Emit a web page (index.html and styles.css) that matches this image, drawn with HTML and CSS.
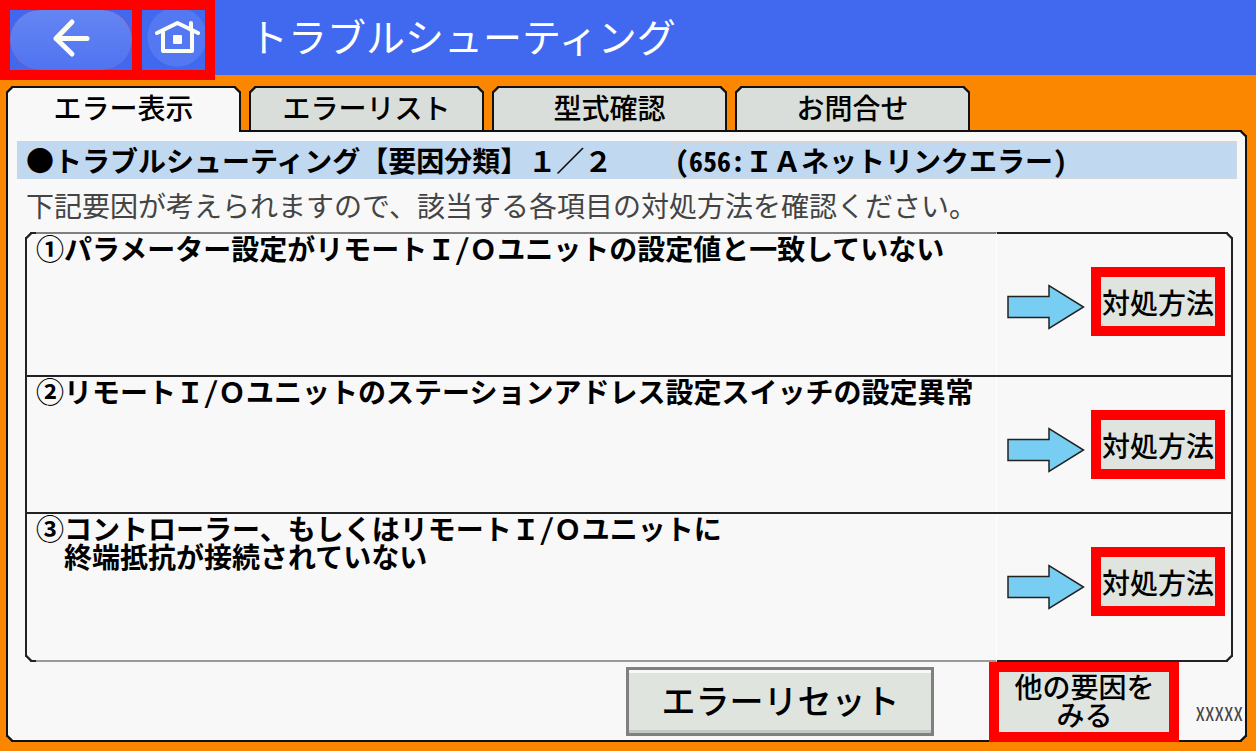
FILE: index.html
```html
<!DOCTYPE html>
<html lang="ja">
<head>
    <meta charset="UTF-8">
    <meta name="viewport" content="width=device-width, initial-scale=1.0">
    <title>トラブルシューティング</title>
    <link rel="stylesheet" href="styles.css">
</head>
<body>

<header class="header">
    <nav class="nav">
        <button class="nav-back" aria-label="戻る">
            <svg width="38" height="40" viewBox="0 0 38 40" fill="none" stroke="#fbfdf4" stroke-width="5" stroke-linecap="round" stroke-linejoin="round">
                <path d="M20 4L4 20.500L20 36M4 20.500H35"/>
            </svg>
        </button>
        <button class="nav-home" aria-label="ホーム">
            <svg width="46" height="34" viewBox="0 0 46 34" fill="none" stroke="#fbfdf4" stroke-width="4" stroke-linecap="round" stroke-linejoin="round">
                <path d="M3 13L23.500 3L44 13M37 10V3M9 12V31H38V12"/>
                <rect x="19" y="15" width="9" height="9" rx="1" fill="#fbfdf4" stroke="none"/>
            </svg>
        </button>
    </nav>
    <h1 class="title">トラブルシューティング</h1>
</header>

<main class="main">
    <div class="tabs">
        <button class="tab active">エラー表示</button>
        <button class="tab">エラーリスト</button>
        <button class="tab">型式確認</button>
        <button class="tab">お問合せ</button>
    </div>

    <section class="panel">
        <div class="band">
            <h2 class="band-title">●トラブルシューティング【要因分類】１／２</h2>
            <p class="band-error"><span class="half">(656:</span>ＩＡネットリンクエラー<span class="half">)</span></p>
        </div>
        <p class="lead">下記要因が考えられますので、該当する各項目の対処方法を確認ください。</p>

        <ul class="causes">
            <li class="row">
                <p class="cause">①パラメーター設定がリモートＩ<span class="half">/</span>Ｏユニットの設定値と一致していない</p>
                <div class="action">
                    <svg class="arrow" width="78" height="46" viewBox="0 0 78 46">
                        <path d="M1 12.500H42V1.500L76.500 23L42 44.500V33.500H1Z" fill="#78cdf2" stroke="#222" stroke-width="1.500"/>
                    </svg>
                    <button class="fix">対処方法</button>
                </div>
            </li>
            <li class="row">
                <p class="cause">②リモートＩ<span class="half">/</span>Ｏユニットのステーションアドレス設定スイッチの設定異常</p>
                <div class="action">
                    <svg class="arrow" width="78" height="46" viewBox="0 0 78 46">
                        <path d="M1 12.500H42V1.500L76.500 23L42 44.500V33.500H1Z" fill="#78cdf2" stroke="#222" stroke-width="1.500"/>
                    </svg>
                    <button class="fix">対処方法</button>
                </div>
            </li>
            <li class="row">
                <p class="cause">③コントローラー、もしくはリモートＩ<span class="half">/</span>Ｏユニットに<br>　終端抵抗が接続されていない</p>
                <div class="action">
                    <svg class="arrow" width="78" height="46" viewBox="0 0 78 46">
                        <path d="M1 12.500H42V1.500L76.500 23L42 44.500V33.500H1Z" fill="#78cdf2" stroke="#222" stroke-width="1.500"/>
                    </svg>
                    <button class="fix">対処方法</button>
                </div>
            </li>
        </ul>

        <footer class="footer">
            <button class="reset">エラーリセット</button>
            <button class="more">他の要因を<br>みる</button>
            <span class="code half">XXXXX</span>
        </footer>
    </section>
</main>

</body>
</html>
```

FILE: styles.css
```css
* {
    box-sizing: border-box;
}

body {
    margin: 0;
    min-height: 100vh;
    display: flex;
    flex-direction: column;
    font-family: "Noto Sans CJK JP", sans-serif;
    font-size: 28px;
    line-height: 28px;
    color: #000;
    background-color: #fb8600;
}

h1, h2, p, ul {
    margin: 0;
    padding: 0;
    font-weight: normal;
}

button {
    font: inherit;
    color: inherit;
    padding: 0;
    border: none;
    cursor: pointer;
}

/* half-width latin */
.half {
    font-feature-settings: "hwid";
}

/* Header */
.header {
    display: flex;
    align-items: flex-start;
    gap: 34px;
    height: 75px;
    background-color: #4169f0;
}

.nav {
    display: flex;
    gap: 10px;
    padding: 10px;
    background-color: #f00;
}

.nav button {
    display: flex;
    align-items: center;
    justify-content: center;
    height: 60px;
}

.nav .nav-back {
    width: 122px;
    padding-bottom: 5px;
    background: linear-gradient(#6585f3, #5074f1 60px);
    border-radius: 30px;
    box-shadow: 0 0 0 30px #4169f0;
    clip-path: inset(0);
}

.nav .nav-home {
    width: 63px;
    padding: 0 0 6px 7px;
    background: radial-gradient(circle at 35px 27px, #5478f1 29px, transparent 30px), #4169f0;
}

.title {
    font-size: 39px;
    line-height: 70px;
    color: #fff;
}

/* Tabs */
.main {
    flex: 1;
    display: flex;
    flex-direction: column;
    padding: 11px 9px 9px 6px;
}

.tabs {
    display: flex;
    gap: 8px;
}

.tab {
    width: 235px;
    height: 44px;
    padding-bottom: 4px;
    font-weight: 500;
    background-color: #dadeda;
    border: 2px solid #111;
    border-bottom: none;
    border-radius: 6px 6px 0 0;
    corner-shape: bevel;
}

.tab.active {
    position: relative;
    height: 46px;
    margin-bottom: -2px;
    padding-bottom: 6px;
    background-color: #f8f8f8;
}

/* Panel */
.panel {
    flex: 1;
    display: flex;
    flex-direction: column;
    padding: 9px 8px 0 9px;
    background-color: #f8f8f8;
    border: 2px solid #111;
    border-radius: 0 6px 6px 6px;
    corner-shape: bevel;
}

.band {
    display: flex;
    background-color: #c0d8f0;
}

.band-title {
    width: 654px;
    padding-left: 9px;
    font-size: 28px;
    font-weight: bold;
    line-height: 38px;
}

.band-error {
    flex: 1;
    padding-left: 2px;
    font-weight: bold;
    line-height: 34px;
    border: 2px solid #d2d6dc;
}

.lead {
    padding-left: 9px;
    line-height: 53px;
    color: #444;
}

/* Cause list */
.causes {
    display: grid;
    grid-template-rows: minmax(141px, auto) minmax(137px, auto) minmax(148px, auto);
    margin: 0 4px 0 8px;
    list-style: none;
    border: 2px solid #222;
    border-radius: 6px;
    corner-shape: bevel;
}

.row {
    display: flex;
    border-top: 2px solid #222;
}

.row:first-child {
    border-top: none;
}

.cause {
    flex: 1;
    margin-left: 9px;
    font-weight: bold;
    border-right: 1px solid #fff;
}

/* the text column softens the outer frame */
.row:first-child .cause {
    margin-top: -2px;
    border-top: 2px solid #808080;
}

.row:last-child .cause {
    margin-bottom: -2px;
    border-bottom: 2px solid #999;
}

.action {
    display: flex;
    align-items: flex-start;
    gap: 6px;
    padding: 33px 6px 0 10px;
}

.arrow {
    margin-top: 17px;
}

.fix, .more {
    font-weight: 500;
    background-color: #dfe4df;
    border: 10px solid #f00;
}

.fix {
    width: 134px;
    height: 69px;
}

/* Footer */
.footer {
    display: flex;
    align-items: flex-start;
    justify-content: flex-end;
}

.reset {
    width: 308px;
    height: 69px;
    margin: 5px 55px 0 0;
    padding-bottom: 4px;
    font-size: 34px;
    font-weight: 500;
    background-color: #dfe4df;
    border: 3px solid #808080;
    box-shadow: inset 0 3px #f8f8f8, inset 0 -3px #c4c8c4;
}

.more {
    width: 190px;
    height: 80px;
    padding-bottom: 4px;
    margin-bottom: -2px;
}

.code {
    margin: 37px -6px 0 16px;
    font-size: 19px;
    color: #444;
}
```
